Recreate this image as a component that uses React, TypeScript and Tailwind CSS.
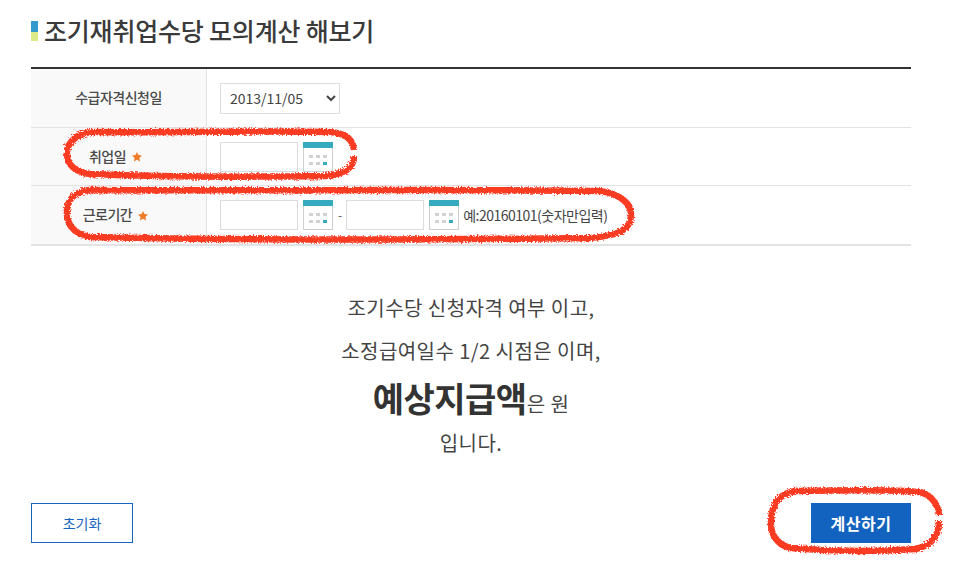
const font = "font-['Noto_Sans_CJK_KR','Noto_Sans',sans-serif]";

function CalendarIcon() {
  return (
    <svg width="30" height="30" viewBox="0 0 30 30" className="shrink-0">
      <rect x="0.5" y="0.5" width="29" height="29" fill="#fff" stroke="#cfcfcf" />
      <rect x="0" y="0" width="30" height="6" fill="#36abbf" />
      <rect x="6" y="13" width="4" height="3" fill="#d2d2d2" />
      <rect x="13" y="13" width="4" height="3" fill="#d2d2d2" />
      <rect x="20" y="13" width="4" height="3" fill="#d2d2d2" />
      <rect x="6" y="20" width="4" height="3" fill="#d2d2d2" />
      <rect x="13" y="20" width="4" height="3" fill="#d2d2d2" />
      <rect x="20" y="20" width="4" height="3" fill="#36abbf" />
    </svg>
  );
}

function DateInput() {
  return (
    <div className="flex items-center gap-[5px]">
      <input type="text" className="w-[78px] h-[30px] border border-[#dcdcdc] bg-white" />
      <CalendarIcon />
    </div>
  );
}

function Star() {
  return (
    <svg width="10" height="10" viewBox="0 0 10 10" className="shrink-0 mt-[2px] mr-[6px]">
      <path d="M5 0 L6.5 3.1 L10 3.6 L7.4 6 L8.1 9.6 L5 7.8 L1.9 9.6 L2.6 6 L0 3.6 L3.5 3.1 Z" fill="#ee7d2b" />
    </svg>
  );
}

function Row({ label, star, children, rowClass }: { label: string; star?: boolean; children: React.ReactNode; rowClass: string }) {
  return (
    <div className={rowClass}>
      <div className="w-[176px] shrink-0 bg-[#f9f9f9] border-r border-[#e3e3e3] flex items-center justify-center gap-[6px] pb-[1px] text-[14px] font-medium text-[#4a4a4a] tracking-[-0.5px]">
        {label}
        {star && <Star />}
      </div>
      <div className="flex-1 flex items-center pl-[13px]">{children}</div>
    </div>
  );
}

function Scribbles() {
  return (
    <svg width="957" height="565" className="absolute left-0 top-0 pointer-events-none">
      <defs>
        <filter id="rough" x="-5%" y="-20%" width="110%" height="140%">
          <feTurbulence type="fractalNoise" baseFrequency="0.7" numOctaves="2" seed="4" />
          <feDisplacementMap in="SourceGraphic" scale="5" />
        </filter>
      </defs>
      <g fill="none" stroke="#fb3a20" strokeWidth="6.5" filter="url(#rough)">
        <path d="M354 150 C353 140 346 133 330 132 C260 130 190 133 95 132 C78 132 67 142 67 153 C67 164 74 172 90 174 C160 177 250 177 325 176 C345 174 354 168 354 156" />
        <path d="M90 190 C250 191 450 189 600 191 C622 194 632 205 631 216 C630 230 618 236 590 238 C430 240 230 240 90 237 C72 234 66 222 67 210 C68 197 78 191 90 190 Z" />
        <path d="M939 515 C938 505 932 495 920 492 C890 489 840 490 795 491 C778 494 772 505 771 520 C770 532 775 544 790 548 C825 551 870 552 915 549 C932 546 939 535 939 521" />
      </g>
    </svg>
  );
}

export default function App() {
  return (
    <div className={`relative w-[957px] h-[565px] overflow-hidden bg-white pl-[31px] pr-[46px] pt-[17px] ${font}`}>
      <div className="flex items-center gap-[6px] h-[27px]">
        <div className="w-[7px] h-[20px] flex flex-col">
          <div className="h-[11px] bg-[#3499cc]" />
          <div className="h-[9px] bg-[#dcea8a]" />
        </div>
        <h2 className="text-[25px] font-medium text-[#3a3a3a] leading-none tracking-[-0.2px]">조기재취업수당 모의계산 해보기</h2>
      </div>

      <div className="mt-[23px] border-t-2 border-[#333333]">
        <Row label="수급자격신청일" rowClass="flex h-[59px] border-b border-[#e3e3e3]">
          <select defaultValue="2013/11/05" className="w-[120px] h-[31px] border border-[#dcdcdc] bg-white pl-[5px] text-[14px] text-[#444444]">
            <option>2013/11/05</option>
          </select>
        </Row>
        <Row label="취업일" star rowClass="flex h-[58px] border-b border-[#e3e3e3]">
          <DateInput />
        </Row>
        <Row label="근로기간" star rowClass="flex h-[60px] border-b-2 border-[#e3e3e3]">
          <DateInput />
          <span className="ml-[5px] mr-[4px] text-[12px] text-[#555555]">-</span>
          <DateInput />
          <span className="ml-[4px] text-[14px] text-[#444444] tracking-[-0.5px]">예:20160101(숫자만입력)</span>
        </Row>
      </div>

      <div className="mt-[44px] flex flex-col items-center text-[#444444] text-[20px] tracking-[0.45px]">
        <p className="h-[35px] leading-[35px]">조기수당 신청자격 여부 이고,</p>
        <p className="mt-[8px] h-[35px] leading-[35px]">소정급여일수 1/2 시점은 이며,</p>
        <p className="mt-[5px] h-[50px] leading-[50px]">
          <strong className="text-[34px] font-bold text-[#333333] tracking-[-0.5px]">예상지급액</strong>은 원
        </p>
        <p className="mt-[2px] h-[35px] leading-[35px]">입니다.</p>
      </div>

      <div className="mt-[43px] flex justify-between">
        <button className="w-[102px] h-[40px] border border-[#1565c0] bg-white text-[14px] text-[#1565c0]">초기화</button>
        <button className="w-[100px] h-[40px] bg-[#1263c0] text-[16px] font-bold text-white tracking-[0.5px]">계산하기</button>
      </div>

      <Scribbles />
    </div>
  );
}
